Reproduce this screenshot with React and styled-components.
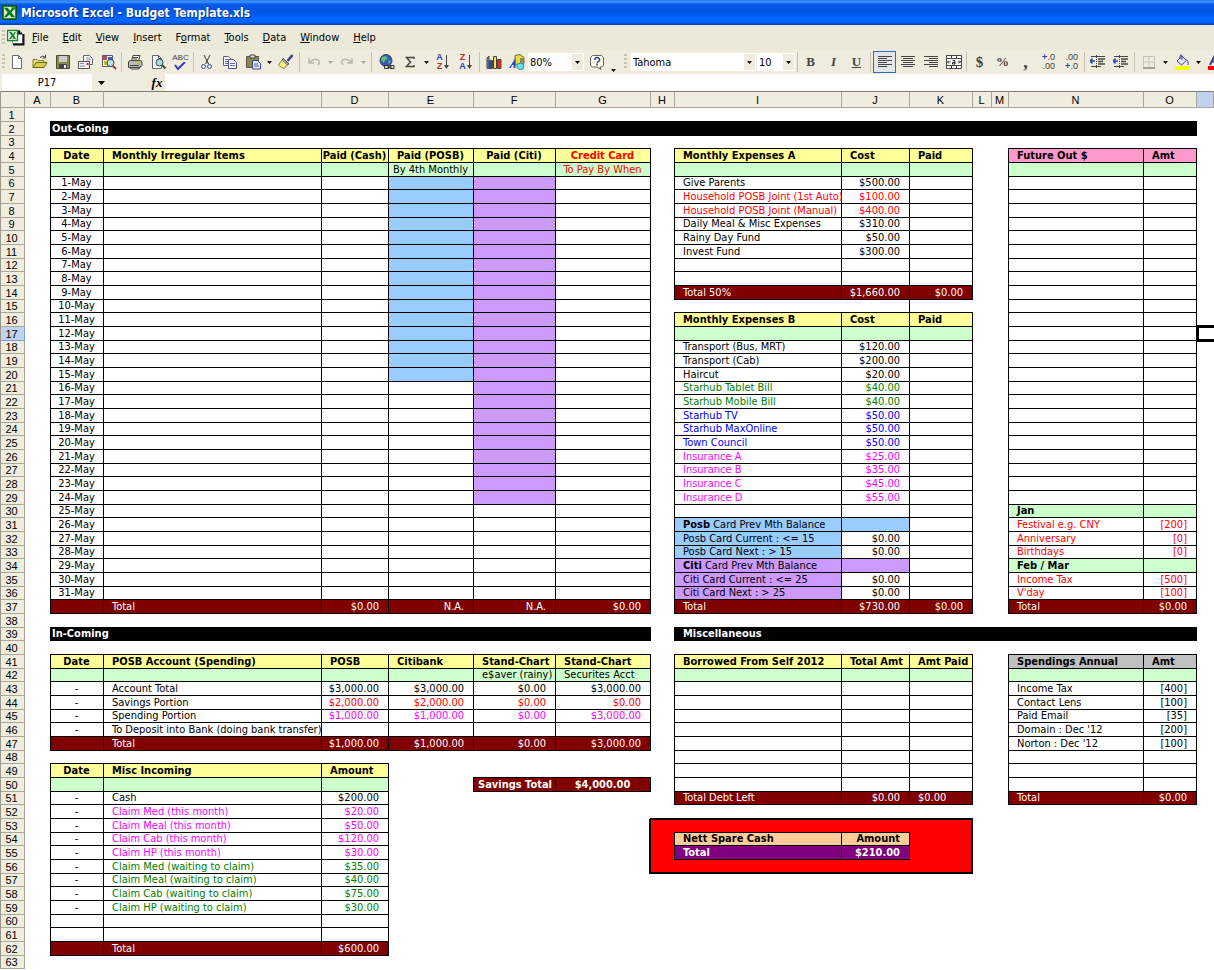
import React from "react";
import styled, { createGlobalStyle } from "styled-components";

const uiFont = `"DejaVu Sans Condensed", Tahoma, "DejaVu Sans", sans-serif`;
const headFont = `"Liberation Sans", Arial, sans-serif`;

const GlobalStyle = createGlobalStyle`
  * { box-sizing: border-box; }
  body { margin: 0; background: #fff; font-family: ${uiFont}; font-size: 11px; color: #000; }
  button, input, select { font: inherit; color: inherit; }
`;

/* ---------- window chrome ---------- */

const Window = styled.div`
  min-height: 100vh;
  overflow: hidden;
`;

const TitleBar = styled.header`
  display: flex;
  align-items: center;
  gap: 4px;
  height: 25px;
  padding: 0 2px;
  background: linear-gradient(#2a7bf0 0, #3d95ff 2px, #0a5ae8 4px, #0054e3 11px, #0066ff 18px, #0066ff 22px, #0046d5 24px, #0038b0 25px);
`;

const TitleText = styled.h1`
  margin: 0;
  color: #fff;
  font-size: 12px;
  line-height: 16px;
  white-space: nowrap;
  text-shadow: 1px 1px 0 #0a2f8a;
`;

const MenuBar = styled.nav`
  display: flex;
  align-items: center;
  height: 25px;
  padding-left: 2px;
  background: #ece9d8;
`;

const MenuItem = styled.button`
  border: 0;
  background: none;
  padding: 0 7px;
  line-height: 16px;
  white-space: nowrap;
`;

const BookIcon = styled.span`
  display: flex;
  width: 18px;
`;

const Toolbar = styled.div`
  display: flex;
  align-items: center;
  height: 24px;
  background: #efecde;
  white-space: nowrap;
`;

const Grip = styled.span`
  flex: none;
  width: 3px;
  height: 16px;
  margin: 0 ${(p) => p.$after || 0}px 0 ${(p) => p.$before ?? 2}px;
  background: repeating-linear-gradient(#c8c4b2 0 2px, #efecde 2px 4px);
`;

const ToolButton = styled.button`
  flex: none;
  display: flex;
  align-items: center;
  justify-content: center;
  width: 23px;
  height: 22px;
  padding: 0;
  border: 1px solid ${(p) => (p.$on ? "#316ac5" : "transparent")};
  background: ${(p) => (p.$on ? "#e1e6e8" : "none")};
`;

const CaretButton = styled(ToolButton)`
  width: 10px;
  align-items: ${(p) => (p.$low ? "flex-end" : "center")};
`;

const Divider = styled.span`
  flex: none;
  width: 1px;
  height: 20px;
  margin: 0 ${(p) => p.$gap || 1}px;
  background: #c5c2b2;
`;

const Combo = styled.label`
  flex: none;
  display: flex;
  align-items: center;
  width: ${(p) => p.$width}px;
  height: 18px;
  margin-right: 1px;
  padding-right: 1px;
  background: #fff;
`;

const ComboSelect = styled.select`
  flex: 1;
  min-width: 0;
  height: 18px;
  padding: 0 2px;
  border: 0;
  appearance: none;
  background: none;
`;

const ComboArrow = styled.span`
  display: flex;
  align-items: center;
  justify-content: center;
  width: 11px;
  height: 16px;
  background: #efecde;
`;

const FormulaBar = styled.div`
  display: flex;
  align-items: center;
  height: 17px;
  padding-left: 2px;
  background: #efecde;
`;

const NameBox = styled.input`
  width: 90px;
  height: 17px;
  border: 0;
  padding: 0;
  text-align: center;
  background: #fff;
`;

const NameArrow = styled.button`
  display: flex;
  align-items: center;
  justify-content: center;
  width: 18px;
  height: 17px;
  padding: 0;
  border: 0;
  background: none;
`;

const FxButton = styled.button`
  width: 16px;
  height: 17px;
  margin-left: 39px;
  padding: 0;
  border: 0;
  background: none;
  font: italic bold 13px/16px "Liberation Serif", serif;
`;

const FormulaInput = styled.input`
  flex: 1;
  min-width: 0;
  height: 17px;
  border: 0;
  padding: 0 2px;
  background: #fff;
`;

/* ---------- sheet ---------- */

const Sheet = styled.table`
  width: 100%;
  min-width: 1200px;
  table-layout: fixed;
  border-collapse: separate;
  border-spacing: 0;
  border-left: 1px solid #9a988a;

  tbody tr { height: 14px; }
  tbody tr:nth-child(3n) { height: 13px; }
`;

const ColHead = styled.th`
  height: 17px;
  padding: 0 1px 0 0;
  border: solid #aca899;
  border-top-color: #7d7b6f;
  border-width: 1px 1px 1px 0;
  background: ${(p) => (p.$active ? "#c1d2ee" : "#efedde")};
  font: 11px/14px ${headFont};
`;

const RowHead = styled.th`
  padding: 0 2px 0 0;
  border: solid ${(p) => (p.$active ? "#7f9fd6" : "#aca899")};
  border-width: 0 1px 1px 0;
  background: ${(p) => (p.$active ? "#c1d2ee" : "#efedde")};
  font: 11px/12px ${headFont};
`;

const padding = {
  left: "0 0 1px 8px",
  edge: "0 0 1px 1px",
  right: "0 10px 1px 0",
  tight: "0 4px 1px 0",
  center: "0 2px 1px 0",
};

const horizontal = { left: "left", edge: "left", center: "center", right: "right", tight: "right" };

/* Grid lines are inset shadows so that they meet squarely at the cell corners. */
const Cell = styled.td`
  padding: ${(p) => padding[p.$align]};
  background-color: ${(p) => p.$bg || "transparent"};
  background-image: ${(p) => (p.$corner ? "linear-gradient(#000, #000)" : "none")};
  background-position: 100% 100%;
  background-size: 1px 1px;
  background-repeat: no-repeat;
  box-shadow: inset ${(p) => -p.$right}px 0 #000, inset 0 ${(p) => -p.$bottom}px #000, inset 0 ${(p) => p.$top || 0}px #000;
  color: ${(p) => p.$color || "#000"};
  font-weight: ${(p) => (p.$bold ? 700 : 400)};
  text-align: ${(p) => horizontal[p.$align]};
  line-height: 12px;
  white-space: nowrap;
  position: ${(p) => (p.$active ? "relative" : "static")};
`;

const Cursor = styled.span`
  position: absolute;
  inset: -2px -4px -1px 0;
  border: 3px solid #000;
  border-left-width: 2px;
`;

const cols = "ABCDEFGHIJKLMNOP".split("");
const widths = [26, 53, 218, 67, 85, 82, 95, 24, 167, 68, 63, 19, 17, 135, 53];
const C = {
  yellow: "#ffff99", green: "#ccffcc", blue: "#99ccff", violet: "#cc99ff", pink: "#ff99cc",
  maroon: "#800000", gray: "#c0c0c0", peach: "#ffcc99", purple: "#800080", red: "#ff0000",
  tGreen: "#008000", tBlue: "#0000ff", tPink: "#ff00ff", white: "#ffffff", black: "#000000",
};

const cells = {};
const at = (col, row) => (cells[col + row] ||= {});
const span = (from, to) => cols.slice(cols.indexOf(from), cols.indexOf(to) + 1);

function fill(from, to, top, bottom, props) {
  for (let r = top; r <= bottom; r++) span(from, to).forEach((c) => Object.assign(at(c, r), props));
}

function write(col, row, values, props = {}) {
  values.forEach((text, i) => {
    if (text === "") return;
    const c = cols[cols.indexOf(col) + i];
    const money = typeof text === "string" && /^(\$|\[|N\.A)/.test(text);
    Object.assign(at(c, row), { text, align: c === "B" ? "center" : money ? "right" : "left" }, props);
  });
}

function block(from, to, top, bottom, headColor, heads) {
  fill(from, to, top, bottom, { box: true });
  fill(from, to, top, top, { bg: headColor, bold: true });
  fill(from, to, top + 1, top + 1, { bg: C.green });
  fill(from, to, bottom, bottom, { bg: C.maroon, color: C.white });
  write(from, top, heads);
}

function banner(from, to, row, text, align) {
  fill(from, to, row, row, { bg: C.black, covered: true });
  Object.assign(at(from, row), { covered: false, box: true, colSpan: span(from, to).length, color: C.white, bold: true, text, align });
}

banner("B", "O", 2, "Out-Going", "edge");
banner("B", "G", 39, "In-Coming", "edge");
banner("I", "O", 39, "Miscellaneous", "left");

block("B", "G", 4, 37, C.yellow, ["Date", "Monthly Irregular Items"]);
write("D", 4, ["Paid (Cash)", "Paid (POSB)", "Paid (Citi)"], { align: "center" });
write("G", 4, ["Credit Card"], { align: "center", color: C.red });
write("E", 5, ["By 4th Monthly"], { align: "center" });
write("G", 5, ["To Pay By When"], { align: "center", color: C.red });
for (let d = 1; d <= 31; d++) write("B", d + 5, [`${d}-May`]);
fill("E", "E", 6, 20, { bg: C.blue });
fill("F", "F", 6, 29, { bg: C.violet });
write("C", 37, ["Total", "$0.00", "N.A.", "N.A.", "$0.00"]);

block("I", "K", 4, 14, C.yellow, ["Monthly Expenses A", "Cost", "Paid"]);
write("I", 6, ["Give Parents", "$500.00"]);
write("I", 7, ["Household POSB Joint (1st Auto)", "$100.00"], { color: C.red });
write("I", 8, ["Household POSB Joint (Manual)", "$400.00"], { color: C.red });
write("I", 9, ["Daily Meal & Misc Expenses", "$310.00"]);
write("I", 10, ["Rainy Day Fund", "$50.00"]);
write("I", 11, ["Invest Fund", "$300.00"]);
write("I", 14, ["Total 50%", "$1,660.00", "$0.00"]);
at("J", 15).right = 1;

block("I", "K", 16, 37, C.yellow, ["Monthly Expenses B", "Cost", "Paid"]);
[
  ["Transport (Bus, MRT)", "$120.00"],
  ["Transport (Cab)", "$200.00"],
  ["Haircut", "$20.00"],
  ["Starhub Tablet Bill", "$40.00", C.tGreen],
  ["Starhub Mobile Bill", "$40.00", C.tGreen],
  ["Starhub TV", "$50.00", C.tBlue],
  ["Starhub MaxOnline", "$50.00", C.tBlue],
  ["Town Council", "$50.00", C.tBlue],
  ["Insurance A", "$25.00", C.tPink],
  ["Insurance B", "$35.00", C.tPink],
  ["Insurance C", "$45.00", C.tPink],
  ["Insurance D", "$55.00", C.tPink],
].forEach(([name, cost, color], i) => write("I", 18 + i, [name, cost], { color }));
fill("I", "I", 31, 33, { bg: C.blue });
fill("J", "J", 31, 31, { bg: C.blue });
fill("I", "I", 34, 36, { bg: C.violet });
fill("J", "J", 34, 34, { bg: C.violet });
write("I", 31, [<><b>Posb</b> Card Prev Mth Balance</>]);
write("I", 32, ["Posb Card Current : <= 15", "$0.00"]);
write("I", 33, ["Posb Card Next : > 15", "$0.00"]);
write("I", 34, [<><b>Citi</b> Card Prev Mth Balance</>]);
write("I", 35, ["Citi Card Current : <= 25", "$0.00"]);
write("I", 36, ["Citi Card Next : > 25", "$0.00"]);
write("I", 37, ["Total", "$730.00", "$0.00"]);

block("N", "O", 4, 37, C.pink, ["Future Out $", "Amt"]);
fill("N", "O", 30, 30, { bg: C.green, bold: true });
fill("N", "O", 34, 34, { bg: C.green, bold: true });
write("N", 30, ["Jan"]);
write("N", 31, ["Festival e.g. CNY", "[200]"], { color: C.red });
write("N", 32, ["Anniversary", "[0]"], { color: C.red });
write("N", 33, ["Birthdays", "[0]"], { color: C.red });
write("N", 34, ["Feb / Mar"]);
write("N", 35, ["Income Tax", "[500]"], { color: C.red });
write("N", 36, ["V'day", "[100]"], { color: C.red });
write("N", 37, ["Total", "$0.00"]);

block("B", "G", 41, 47, C.yellow, ["Date", "POSB Account (Spending)", "POSB", "Citibank", "Stand-Chart", "Stand-Chart"]);
write("F", 42, ["e$aver (rainy)", "Securites Acct"]);
write("B", 43, ["-", "Account Total", "$3,000.00", "$3,000.00", "$0.00", "$3,000.00"]);
write("B", 44, ["-", "Savings Portion"]);
write("D", 44, ["$2,000.00", "$2,000.00", "$0.00", "$0.00"], { color: C.red });
write("B", 45, ["-", "Spending Portion"]);
write("D", 45, ["$1,000.00", "$1,000.00", "$0.00", "$3,000.00"], { color: C.tPink });
write("B", 46, ["-", "To Deposit into Bank (doing bank transfer)"]);
write("C", 47, ["Total", "$1,000.00", "$1,000.00", "$0.00", "$3,000.00"]);

block("B", "D", 49, 62, C.yellow, ["Date", "Misc Incoming", "Amount"]);
[
  ["Cash", "$200.00"],
  ["Claim Med (this month)", "$20.00", C.tPink],
  ["Claim Meal (this month)", "$50.00", C.tPink],
  ["Claim Cab (this month)", "$120.00", C.tPink],
  ["Claim HP (this month)", "$30.00", C.tPink],
  ["Claim Med (waiting to claim)", "$35.00", C.tGreen],
  ["Claim Meal (waiting to claim)", "$40.00", C.tGreen],
  ["Claim Cab (waiting to claim)", "$75.00", C.tGreen],
  ["Claim HP (waiting to claim)", "$30.00", C.tGreen],
].forEach(([name, amount, color], i) => {
  write("B", 51 + i, ["-"]);
  write("C", 51 + i, [name, amount], { color });
});
write("C", 62, ["Total", "$600.00"]);

fill("F", "G", 50, 50, { box: true, bg: C.maroon, color: C.white, bold: true });
write("F", 50, ["Savings Total"], { align: "tight" });
write("G", 50, ["$4,000.00"], { align: "center" });

block("I", "K", 41, 51, C.yellow, ["Borrowed From Self 2012", "Total Amt", "Amt Paid"]);
write("I", 51, ["Total Debt Left", "$0.00"]);
write("K", 51, ["$0.00"], { align: "left" });

block("N", "O", 41, 51, C.gray, ["Spendings Annual", "Amt"]);
[["Income Tax", "[400]"], ["Contact Lens", "[100]"], ["Paid Email", "[35]"], ["Domain : Dec '12", "[200]"], ["Norton : Dec '12", "[100]"]]
  .forEach((line, i) => write("N", 43 + i, line));
write("N", 51, ["Total", "$0.00"]);

fill("H", "K", 53, 56, { bg: C.red });
fill("H", "K", 52, 52, { bottom: 1 });
fill("H", "K", 53, 53, { top: 1 });
fill("H", "K", 56, 56, { bottom: 2 });
fill("G", "G", 53, 56, { right: 2 });
fill("G", "G", 52, 52, { corner: true });
fill("K", "K", 53, 56, { right: 2 });
fill("I", "J", 54, 55, { box: true, bold: true });
fill("I", "J", 54, 54, { bg: C.peach });
fill("I", "J", 55, 55, { bg: C.purple, color: C.white });
write("I", 54, ["Nett Spare Cash"]);
write("J", 54, ["Amount"], { align: "right" });
write("I", 55, ["Total", "$210.00"]);

function SheetCell({ col, row }) {
  const i = cols.indexOf(col);
  const cell = cells[col + row] || {};
  if (cell.covered) return null;
  const next = cells[cols[i + 1] + row];
  const below = cells[col + (row + 1)];
  const diagonal = cells[cols[i + 1] + (row + 1)];
  const active = col === "P" && row === 17;
  return (
    <Cell
      colSpan={cell.colSpan}
      $align={cell.align || "left"}
      $bg={cell.bg}
      $color={cell.color}
      $bold={cell.bold}
      $right={cell.right || (cell.box || next?.box ? 1 : 0)}
      $bottom={cell.bottom || (cell.box || below?.box || below?.covered ? 1 : 0)}
      $top={cell.top}
      $corner={cell.corner || diagonal?.box}
      $active={active}
    >
      {cell.text}
      {active && <Cursor />}
    </Cell>
  );
}

/* ---------- icons ---------- */

const Icon = ({ children, w = 16, h = 16 }) => (
  <svg width={w} height={h} viewBox={`0 0 ${w} ${h}`} fill="none" stroke="#444" strokeWidth="1" aria-hidden="true">{children}</svg>
);

const Caret = ({ color = "#000" }) => (
  <svg width="5" height="3" viewBox="0 0 5 3" aria-hidden="true"><path d="M0 0h5L2.500 3z" fill={color} /></svg>
);

const WideCaret = () => (
  <svg width="7" height="4" viewBox="0 0 7 4" aria-hidden="true"><path d="M0 0h7L3.500 4z" fill="#000" /></svg>
);

const Excel = ({ size = 16 }) => (
  <svg width={size} height={size} viewBox="0 0 16 16" aria-hidden="true">
    <path d="M.5.5h15v15H.5z" fill="#0b7a1e" stroke="#064d10" />
    <path d="M2 2h12v12H2z" fill="#d5ecd0" />
    <path d="M2 3h4l2.500 3L11 3h3L10 8l4 5h-4L8 10l-3 3H2l4-5z" fill="#0b7a1e" />
    <path d="M10 3h4v3" stroke="#0b7a1e" fill="none" />
  </svg>
);

const Book = () => (
  <svg width="18" height="17" viewBox="0 0 18 17" aria-hidden="true">
    <path d="M5.500 1.500h7l3 3v10h-10z" fill="#fff" stroke="#99a" />
    <path d="M12 1.500v3h3M6 15.500h10.500V5" fill="none" stroke="#111" strokeWidth="2" />
    <path d="M.5 1.500h10v10H.5z" fill="#fff" stroke="#128a24" strokeWidth="1.500" />
    <path d="M2 3h2.500l1.500 2L7.500 3H9L7 6.500 9 10H6.500L5.500 8 4 10H2l2.500-3.500z" fill="#128a24" />
  </svg>
);

const icons = {
  new: <Icon><path d="M3.500 1.500h6l3 3v10h-9z" fill="#fff" stroke="#667" /><path d="M9.500 1.500v3h3" stroke="#667" /></Icon>,
  open: <Icon><path d="M1 13.500V5.500h4l1 1h6v3" fill="#e8e070" stroke="#8b862e" /><path d="M1 13.500l3-5h11l-3 5z" fill="#d8cc4a" stroke="#6b6620" /><path d="M8 3.500q3-3 5.500 0M13.500 1v3h-3" /></Icon>,
  save: <Icon><path d="M1.500 1.500h13v13h-13z" fill="#8a8a4a" stroke="#4a4a38" /><path d="M4 2h8v6H4z" fill="#ccc" stroke="none" /><path d="M4 10h8v5H4z" fill="#444" stroke="none" /><path d="M9 11h2v3H9z" fill="#eee" stroke="none" /></Icon>,
  mail: <Icon><path d="M5.500 1.500h6l3 3v6h-9z" fill="#fff" stroke="#667" /><path d="M.5 7.500h11v7H.5z" fill="#f4f2ea" stroke="#555" /><path d="M2 9.500h4M2 12h5M8 4h4M8 6h5" stroke="#88a" /><path d="M8.500 9h2v2h-2z" fill="#a33" stroke="none" /></Icon>,
  search: <Icon><path d="M1.500 1.500h10v11h-10z" fill="#fff" stroke="#556" /><path d="M2 2h4v4H2z" fill="#c44" stroke="none" /><path d="M7 3h5v4H7z" fill="#3563b8" stroke="none" /><path d="M3 7h3v4H3z" fill="#c9b52c" stroke="none" /><circle cx="9.500" cy="9" r="3.500" fill="#bfe6ee" /><path d="M12 12l3 3" stroke="#a33" strokeWidth="2" /></Icon>,
  print: <Icon><path d="M4.500 7L6 1.500h7L11.500 7" fill="#fff" /><path d="M1.500 7.500l2-1h10l1.500 1v4l-2 2h-11.500z" fill="#b9b8b0" /><path d="M3 11.500h9M3 13.500l1 1.500h8l1.500-3M6 3.500h5M6 5h4" /><path d="M10 9h2" stroke="#cc0" strokeWidth="2" /></Icon>,
  preview: <Icon><path d="M2.500 1.500h6l3 3v10h-9z" fill="#fff" stroke="#667" /><path d="M8.500 1.500v3h3" stroke="#667" /><circle cx="9.500" cy="8.500" r="3.500" fill="#a9dce8" /><path d="M12 11l3.500 3.500" strokeWidth="2" /></Icon>,
  cut: <Icon><path d="M5 1l4.500 9M11 1L6.500 10" stroke="#333" /><circle cx="4.500" cy="12.500" r="2" stroke="#3949a8" /><circle cx="10.500" cy="12.500" r="2" stroke="#3949a8" /></Icon>,
  copy: <Icon><path d="M1.500 2.500h5l3 3v6h-8z" fill="#fff" stroke="#5a5f9a" /><path d="M6.500 5.500h5l3 3v6h-8z" fill="#fff" stroke="#4a4f9a" /><path d="M3 5.500h3M3 7.500h3M3 9.500h3M8 9.500h5M8 11.500h5" stroke="#66a" /></Icon>,
  paste: <Icon><path d="M1.500 2.500h12v11h-12z" fill="#8c8748" stroke="#555" /><path d="M5 1h5v3H5z" fill="#ddd" /><path d="M7.500 6.500h5l3 3v5.500h-8z" fill="#e8edff" stroke="#3a4298" /><path d="M9 10h4M9 12h5" stroke="#55a" /></Icon>,
  painter: <Icon><path d="M14.500 1l-5 6" stroke="#34408f" strokeWidth="2.500" /><path d="M5 4.500l6 5.500-2 1-5-4.500z" fill="#aab" stroke="#445" /><path d="M4 6L.5 11q3 3 6 3.500l2.500-4z" fill="#f4f08a" stroke="#8a8640" /></Icon>,
  undo: <Icon><path d="M3 4v5h5M3.500 8.500Q7 4.500 11 5.500t1 5.500" stroke="#bab7a8" strokeWidth="1.500" /></Icon>,
  redo: <Icon><path d="M13 4v5H8M12.500 8.500Q9 4.500 5 5.500T4 11" stroke="#bab7a8" strokeWidth="1.500" /></Icon>,
  link: <Icon><circle cx="7" cy="6.500" r="6" fill="#3557b8" stroke="#445" /><path d="M3 3l4-1 2 3-3 1-1 3-3-3zM9 6l3 1-2 3z" fill="#5fbf76" stroke="none" /><path d="M5.500 11.500h4v3h-4zM11 11.500h4v3h-4zM8 13h5" stroke="#333" fill="#ddd" /></Icon>,
  sum: <Icon><path d="M12 5V3.500H4.500L8.500 8l-4 4.500H12V11" stroke="#444" strokeWidth="1.500" /></Icon>,
  chart: <Icon><path d="M1 14.500V4l2-2v12.500z" fill="#888" /><path d="M3.500 14.500v-8h3v8z" fill="#2d49c8" /><path d="M7.500 14.500v-12h3v12z" fill="#f3e53a" /><path d="M11.500 14.500v-9h3.500v9z" fill="#d83030" /></Icon>,
  draw: <Icon><path d="M6 1.500l5-1 4 3v6l-4 2-5-1z" fill="#f1dd32" stroke="#665" /><path d="M11 4h4v6h-4z" fill="#8a8a60" stroke="none" /><path d="M0 14L6.500 4v10H4.500v-3H3l-1 3z" fill="#2f4cc8" stroke="none" /><path d="M8 10l4-1 3 2-1 4-4 .5-2-2z" fill="#5fe3ec" stroke="#399" /></Icon>,
  help: <Icon><path d="M3.500 1.500h9l2 2v8l-2 1.500H11l1 2.500L8 13H3.500l-2-1.500v-8z" fill="#fdfce0" stroke="#666" /><path d="M6 6V4.500Q8 2.500 10 4.500T8 8.500M8 9.500v2" stroke="#2b3fa8" strokeWidth="1.500" /></Icon>,
  left: <Icon><path d="M1 2.500h14M1 4.500h9M1 6.500h14M1 8.500h9M1 10.500h14M1 12.500h9" /></Icon>,
  center: <Icon><path d="M1 2.500h14M3 4.500h10M1 6.500h14M3 8.500h10M1 10.500h14M3 12.500h10" /></Icon>,
  right: <Icon><path d="M1 2.500h14M6 4.500h9M1 6.500h14M6 8.500h9M1 10.500h14M6 12.500h9" /></Icon>,
  borders: <Icon><path d="M2.500 2.500h11M2.500 2.500v11M13.500 2.500v11M8 3v10M3 8h10" stroke="#c5c3b6" /><path d="M2 14h12" stroke="#888" strokeWidth="1.500" /></Icon>,
  fill: <Icon><path d="M3 7l5-5 4.500 4.500-5 4.500z" fill="#e4e8f4" stroke="#3c4688" /><path d="M8 6V1.500Q6.500 0 6 2v3M12.500 5.500Q15 7 14 11" stroke="#3c4688" /><path d="M1 12h15v4H1z" fill="#ff0" stroke="none" /></Icon>,
};

const Merge = () => (
  <Icon>
    <path d="M.5 1.500h15v13H.5zM.5 4.500h15M.5 11.500h15M5.500 1.500v3M10.500 1.500v3M5.500 11.500v3M10.500 11.500v3" fill="#fff" />
    <path d="M1.500 8h3M3 6.500L1.500 8 3 9.500M14.500 8h-3M13 6.500L14.500 8 13 9.500" />
    <path d="M6.500 6.500h2.500v3.500H6.500V8.500H9" stroke="#222" />
  </Icon>
);

const Indent = () => (
  <Icon>
    <path d="M1 2.500h14M1 12.500h10" />
    <path d="M8 5h7M8 7.500h5M8 10h7" strokeWidth="1.500" />
    <path d="M6.500 1v14" strokeDasharray="1 1" />
    <path d="M0 7h5M2.500 4.500L0 7l2.500 2.500" stroke="#2d3fb4" strokeWidth="1.500" />
  </Icon>
);

const Glyph = styled.span`
  color: #444;
  font: ${(p) => (p.$italic ? "italic " : "")}bold ${(p) => p.$size || 13}px/16px "Liberation Serif", serif;
  text-decoration: ${(p) => (p.$underline ? "underline" : "none")};
`;

const Stack = styled.span`
  display: flex;
  flex-direction: column;
  align-items: ${(p) => p.$align || "center"};
  font: ${(p) => (p.$bold ? "bold " : "")}${(p) => p.$size || 8}px/${(p) => p.$size || 8}px ${headFont};
  color: #444;
`;

const Letter = styled.b`
  color: ${(p) => p.$color};
`;

const SortLetters = styled.span`
  display: flex;
  align-items: center;
  gap: 1px;
`;

const Check = () => (
  <svg width="12" height="8" viewBox="0 0 12 8" aria-hidden="true"><path d="M1 3l3 4 7-7" fill="none" stroke="#2d3fb4" strokeWidth="2" /></svg>
);

const DownArrow = () => (
  <svg width="5" height="15" viewBox="0 0 5 15" aria-hidden="true"><path d="M2.500 0v12" stroke="#444" /><path d="M0 10h5l-2.500 4z" fill="#444" /></svg>
);

const Sort = ({ top, bottom, a, b }) => (
  <SortLetters>
    <Stack $bold $size={9}>
      <Letter $color={a}>{top}</Letter>
      <Letter $color={b}>{bottom}</Letter>
    </Stack>
    <DownArrow />
  </SortLetters>
);

const Blue = styled.b`
  color: #2d3fb4;
`;

const Tool = ({ name, on, children }) => (
  <ToolButton type="button" aria-label={name} $on={on}>{children || icons[name]}</ToolButton>
);

const Drop = ({ name, color, low }) => (
  <CaretButton type="button" aria-label={name} $low={low}><Caret color={color} /></CaretButton>
);

const Picker = ({ name, value, width }) => (
  <Combo $width={width}>
    <ComboSelect aria-label={name} defaultValue={value}><option>{value}</option></ComboSelect>
    <ComboArrow><Caret /></ComboArrow>
  </Combo>
);

const menus = [["", "F", "ile"], ["", "E", "dit"], ["", "V", "iew"], ["", "I", "nsert"], ["F", "o", "rmat"], ["", "T", "ools"], ["", "D", "ata"], ["", "W", "indow"], ["", "H", "elp"]];

const rows = Array.from({ length: 63 }, (_, i) => i + 1);

export default function App() {
  return (
    <Window>
      <GlobalStyle />
      <TitleBar>
        <Excel size={15} />
        <TitleText>Microsoft Excel - Budget Template.xls</TitleText>
      </TitleBar>
      <MenuBar>
        <Grip $before={0} $after={2} />
        <BookIcon><Book /></BookIcon>
        {menus.map(([pre, key, post]) => (
          <MenuItem type="button" key={pre + key + post}>{pre}<u>{key}</u>{post}</MenuItem>
        ))}
      </MenuBar>
      <Toolbar role="toolbar" aria-label="Standard and formatting">
        <Grip />
        <Tool name="new" /><Tool name="open" /><Tool name="save" /><Tool name="mail" /><Tool name="search" />
        <Divider />
        <Tool name="print" /><Tool name="preview" />
        <Tool name="Spelling"><Stack>ABC<Check /></Stack></Tool>
        <Divider />
        <Tool name="cut" /><Tool name="copy" /><Tool name="paste" /><Drop name="Paste options" /><Tool name="painter" />
        <Divider $gap={2} />
        <Tool name="undo" /><Drop name="Undo list" color="#aaa797" /><Tool name="redo" /><Drop name="Redo list" color="#aaa797" />
        <Divider $gap={3} />
        <Tool name="link" /><Tool name="sum" /><Drop name="Sum options" />
        <Tool name="Sort ascending"><Sort top="A" bottom="Z" a="#2d3fb4" b="#b03030" /></Tool>
        <Tool name="Sort descending"><Sort top="Z" bottom="A" a="#b03030" b="#2d3fb4" /></Tool>
        <Divider $gap={2} />
        <Tool name="chart" /><Tool name="draw" />
        <Picker name="Zoom" value="80%" width={56} />
        <Tool name="help" /><Drop name="Toolbar options" low />
        <Grip $before={6} $after={4} />
        <Picker name="Font" value="Tahoma" width={125} />
        <Picker name="Font size" value="10" width={38} />
        <Divider />
        <Tool name="Bold"><Glyph>B</Glyph></Tool>
        <Tool name="Italic"><Glyph $italic>I</Glyph></Tool>
        <Tool name="Underline"><Glyph $underline>U</Glyph></Tool>
        <Divider $gap={2} />
        <Tool name="left" on /><Tool name="center" /><Tool name="right" />
        <Tool name="Merge and center"><Merge /></Tool>
        <Divider />
        <Tool name="Currency"><Glyph $size={15}>$</Glyph></Tool>
        <Tool name="Percent"><Glyph>%</Glyph></Tool>
        <Tool name="Comma"><Glyph $size={18}>,</Glyph></Tool>
        <Tool name="Increase decimal"><Stack $align="flex-end" $size={9}><span><Blue>+</Blue>.0</span><span>.00</span></Stack></Tool>
        <Tool name="Decrease decimal"><Stack $align="flex-end" $size={9}><span>.00</span><span><Blue>+</Blue>.0</span></Stack></Tool>
        <Divider />
        <Tool name="Decrease indent"><Indent /></Tool>
        <Tool name="Increase indent"><Indent /></Tool>
        <Divider $gap={2} />
        <Tool name="borders" /><Drop name="Border options" />
        <Tool name="fill" /><Drop name="Fill options" />
        <Tool name="Font color"><Icon><path d="M3 11L8 1l5 10M5 7.500h6" stroke="#34408f" strokeWidth="2" /><path d="M1 12h15v4H1z" fill="#f00" stroke="none" /></Icon></Tool>
      </Toolbar>
      <FormulaBar>
        <NameBox aria-label="Name box" defaultValue="P17" />
        <NameArrow type="button" aria-label="Named cells"><WideCaret /></NameArrow>
        <FxButton type="button">fx</FxButton>
        <FormulaInput aria-label="Formula" />
      </FormulaBar>
      <Sheet>
        <colgroup>
          <col width="24" />
          {widths.map((w, i) => <col key={cols[i]} width={w} />)}
          <col />
        </colgroup>
        <thead>
          <tr>
            <ColHead aria-label="Select all" />
            {cols.map((c) => <ColHead key={c} scope="col" $active={c === "P"}>{c === "P" ? "" : c}</ColHead>)}
          </tr>
        </thead>
        <tbody>
          {rows.map((r) => (
            <tr key={r}>
              <RowHead scope="row" $active={r === 17}>{r}</RowHead>
              {cols.map((c) => <SheetCell key={c} col={c} row={r} />)}
            </tr>
          ))}
        </tbody>
      </Sheet>
    </Window>
  );
}
